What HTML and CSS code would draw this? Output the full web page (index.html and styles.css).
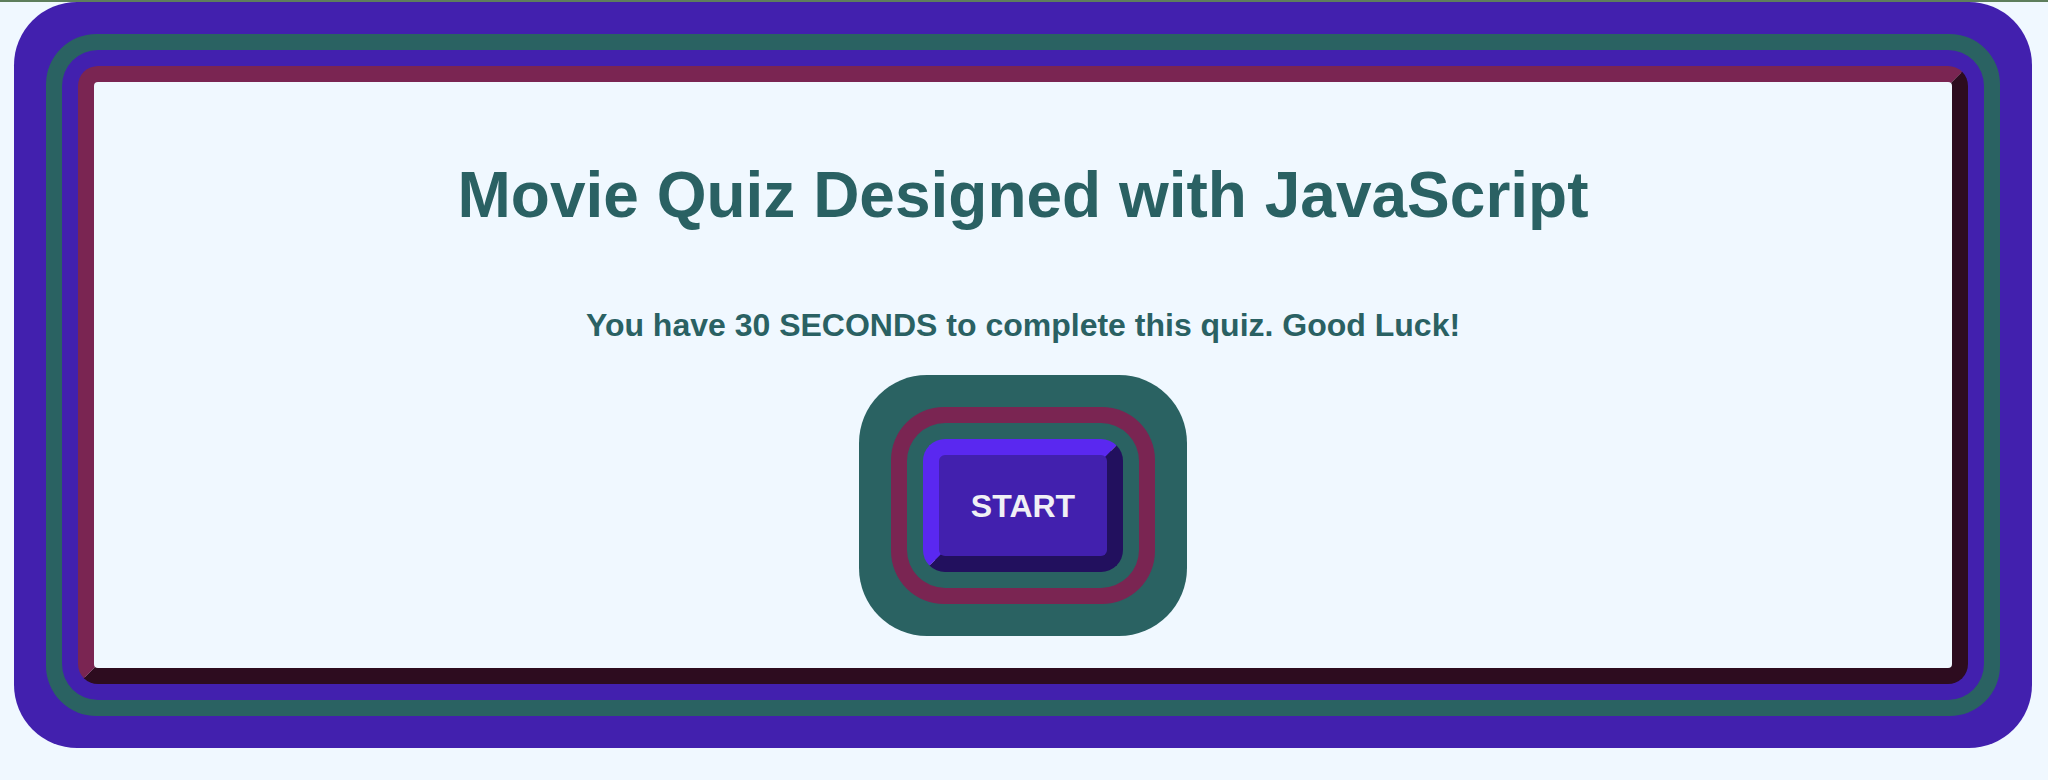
FILE: index.html
```html
<!DOCTYPE html>
<html lang="en">
<head>
<meta charset="utf-8">
<title>Movie Quiz</title>
<link rel="stylesheet" href="styles.css">
</head>
<body>
  <main class="frame">
    <h1 class="title">Movie Quiz Designed with JavaScript</h1>
    <p class="intro">You have 30 SECONDS to complete this quiz. Good Luck!</p>
    <button class="start" type="button">START</button>
  </main>
</body>
</html>
```
FILE: styles.css
```css
html, body {
  margin: 0;
  padding: 0;
}

body {
  background: #f0f8ff;
  border-top: 2px solid #5e7e5c;
  font-family: "Liberation Sans", Arial, sans-serif;
  color: #2a6163;
  min-height: 778px;
}

.frame {
  box-sizing: border-box;
  width: 1890px;
  height: 618px;
  margin: 64px 0 0 78px;
  padding: 77px 0 0;
  border: 16px solid;
  border-color: #7a2552 #2d0c1f #2d0c1f #7a2552;
  border-radius: 20px;
  background: #f0f8ff;
  box-shadow:
    0 0 0 16px #4220ae,
    0 0 0 32px #2a6262,
    0 0 0 64px #4220ae;
  display: flex;
  flex-direction: column;
  align-items: center;
}

.title {
  margin: 0;
  font-size: 64px;
  line-height: 72px;
  font-weight: 700;
}

.intro {
  margin: 76px 0 0;
  font-size: 32px;
  line-height: 36px;
  font-weight: 700;
}

.start {
  box-sizing: border-box;
  width: 200px;
  height: 133px;
  margin-top: 96px;
  padding: 0;
  border: 16px solid;
  border-color: #5a28f0 #22105e #22105e #5a28f0;
  border-radius: 22px;
  background: #4220ae;
  color: #f0f0f5;
  font-family: "Liberation Sans", Arial, sans-serif;
  font-size: 32px;
  line-height: 36px;
  font-weight: 700;
  box-shadow:
    0 0 0 16px #2a6262,
    0 0 0 32px #7a2552,
    0 0 0 64px #2a6262;
  cursor: pointer;
}
```
